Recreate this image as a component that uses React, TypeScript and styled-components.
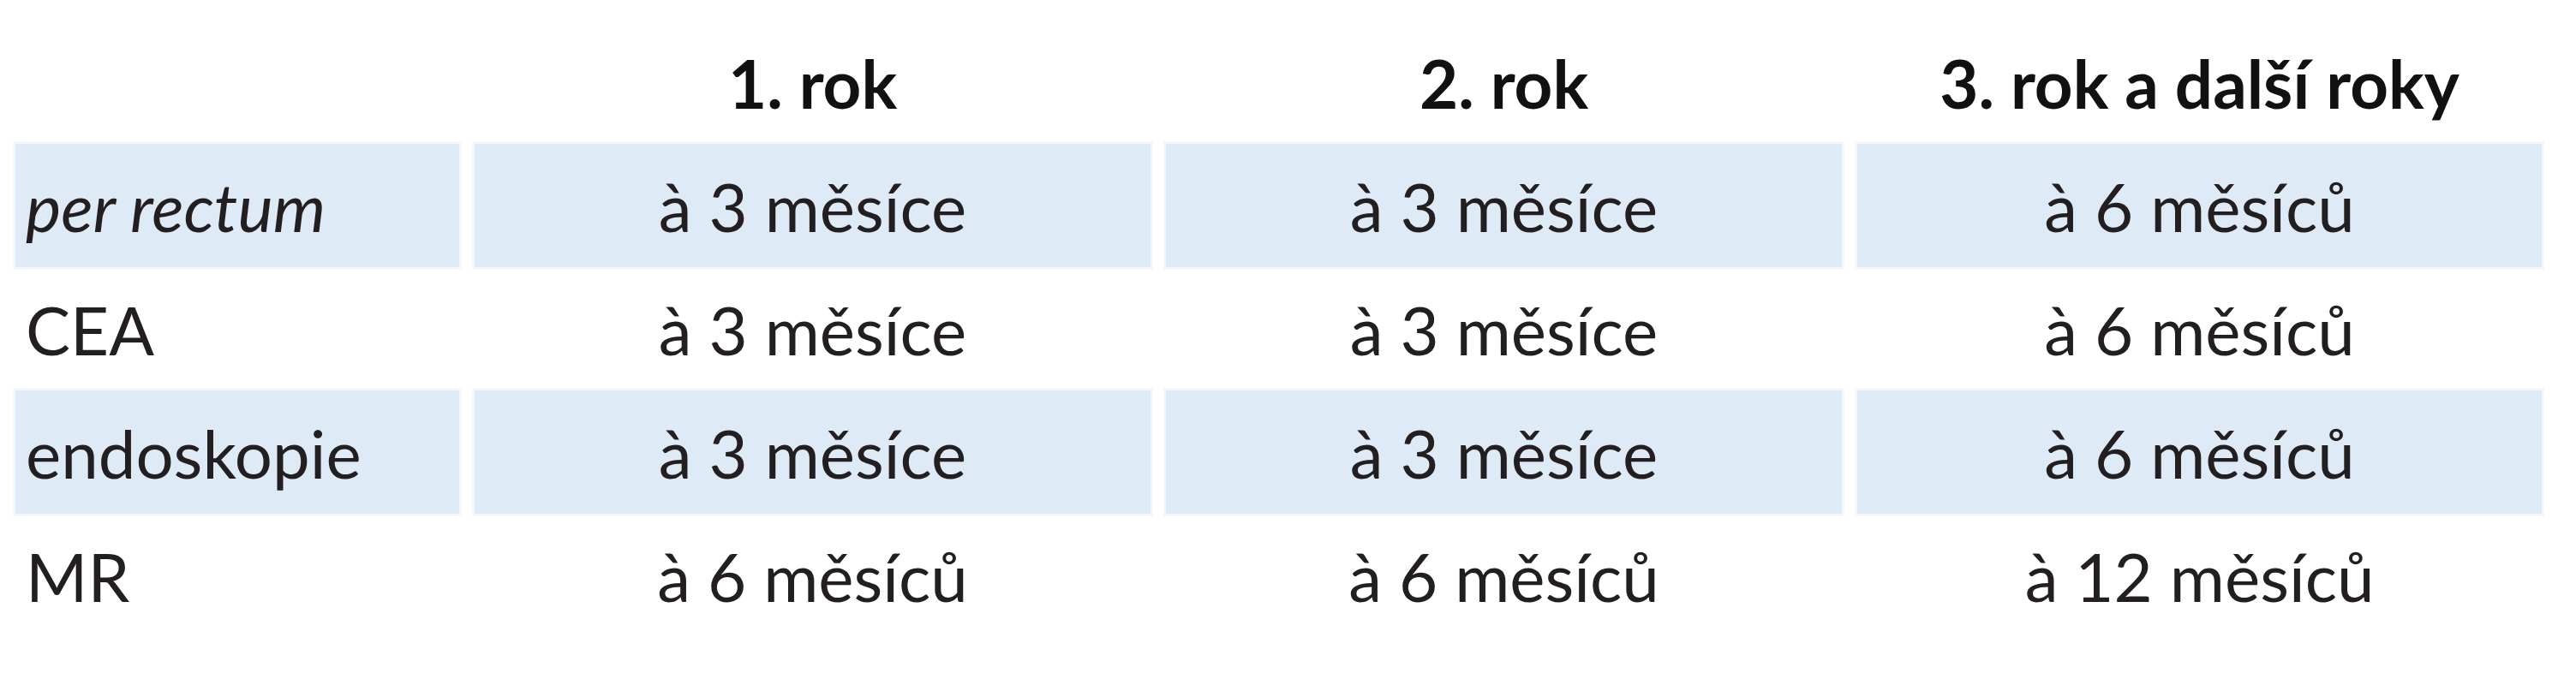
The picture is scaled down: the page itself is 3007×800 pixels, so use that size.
import styled, { createGlobalStyle } from "styled-components";

const GlobalStyle = createGlobalStyle`
  html, body {
    margin: 0;
    padding: 0;
    background: #ffffff;
  }
  body {
    font-family: Lato, "Open Sans", sans-serif;
    color: #231f20;
  }
`;

const headers = ["1. rok", "2. rok", "3. rok a další roky"];

const rows = [
  { label: "per rectum", italic: true, values: ["à 3 měsíce", "à 3 měsíce", "à 6 měsíců"] },
  { label: "CEA", values: ["à 3 měsíce", "à 3 měsíce", "à 6 měsíců"] },
  { label: "endoskopie", values: ["à 3 měsíce", "à 3 měsíce", "à 6 měsíců"] },
  { label: "MR", values: ["à 6 měsíců", "à 6 měsíců", "à 12 měsíců"] },
];

const App = () => {
  return (
    <>
      <GlobalStyle />
      <Page>
        <Table>
          <HeadCell />
          {headers.map((h) => (
            <HeadCell key={h}>{h}</HeadCell>
          ))}
          {rows.map((row, i) => (
            <Row key={row.label}>
              <LabelCell $shaded={i % 2 === 0} $italic={row.italic}>
                {row.label}
              </LabelCell>
              {row.values.map((v, j) => (
                <ValueCell key={j} $shaded={i % 2 === 0}>
                  {v}
                </ValueCell>
              ))}
            </Row>
          ))}
        </Table>
      </Page>
    </>
  );
};

export default App;

const Page = styled.div`
  width: 3007px;
  height: 800px;
  padding: 24px 0 0 18px;
  box-sizing: border-box;
`;

const Table = styled.div`
  display: grid;
  grid-template-columns: 518px 789px 789px 799px;
  grid-auto-rows: 144px;
  column-gap: 18px;
  font-size: 78px;
  line-height: 1.2;
`;

const Row = styled.div`
  display: contents;
`;

const Cell = styled.div<{ $shaded?: boolean }>`
  display: flex;
  align-items: center;
  padding-top: 3px;
  box-sizing: border-box;
  white-space: nowrap;
  background: ${(p) => (p.$shaded ? "#dfeaf7" : "transparent")};
  box-shadow: ${(p) => (p.$shaded ? "0 0 0 3px #f3f8fd" : "none")};
`;

const HeadCell = styled(Cell)`
  justify-content: center;
  font-weight: 700;
  color: #111;
`;

const LabelCell = styled(Cell)<{ $italic?: boolean }>`
  justify-content: flex-start;
  padding-left: 12px;
  font-style: ${(p) => (p.$italic ? "italic" : "normal")};
`;

const ValueCell = styled(Cell)`
  justify-content: center;
`;
